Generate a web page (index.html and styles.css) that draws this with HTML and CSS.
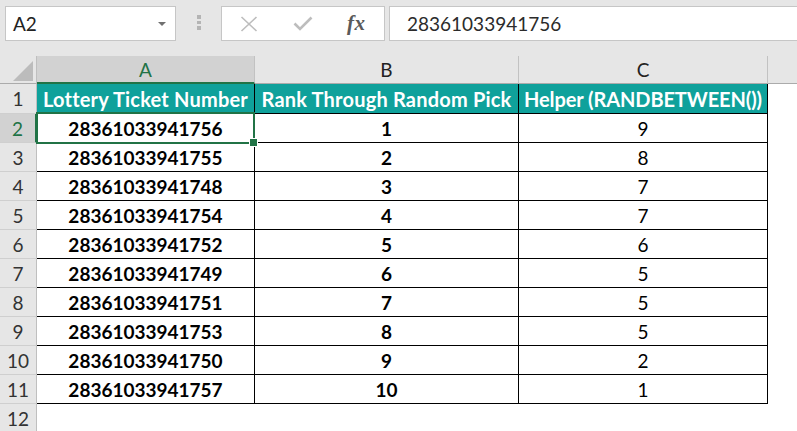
FILE: index.html
```html
<!DOCTYPE html>
<html>
<head>
<meta charset="utf-8">
<link rel="stylesheet" href="styles.css">
</head>
<body>
<div class="app">
  <div class="fbar">
    <div class="namebox"><span>A2</span><span class="arrow"></span></div>
    <div class="dots"><i></i><i></i><i></i></div>
    <div class="fnbox">
      <svg class="ic-x" width="18" height="16" viewBox="0 0 18 16"><path d="M1.5 1 L16.5 15 M16.5 1 L1.5 15" stroke="#bdbdbd" stroke-width="1.6" fill="none"/></svg>
      <svg class="ic-ok" width="20" height="15" viewBox="0 0 20 15"><path d="M1.5 7.5 L7 13 L18.5 1.5" stroke="#bdbdbd" stroke-width="2.6" fill="none"/></svg>
      <span class="fx">fx</span>
    </div>
    <div class="formula">28361033941756</div>
  </div>
  <div class="sheet">
    <div class="corner"><span class="tri"></span></div>
    <div class="ch sel">A</div>
    <div class="ch">B</div>
    <div class="ch">C</div>
    <div class="ch last"></div>

    <div class="rh">1</div>
    <div class="hd">Lottery Ticket Number</div>
    <div class="hd">Rank Through Random Pick</div>
    <div class="hd tight">Helper (RANDBETWEEN())</div>
    <div class="blank"></div>

    <div class="rh sel">2</div>
    <div class="c b active">28361033941756<span class="selbox"><span class="handle"></span></span></div>
    <div class="c b">1</div>
    <div class="c">9</div>
    <div class="blank"></div>

    <div class="rh">3</div>
    <div class="c b">28361033941755</div>
    <div class="c b">2</div>
    <div class="c">8</div>
    <div class="blank"></div>

    <div class="rh">4</div>
    <div class="c b">28361033941748</div>
    <div class="c b">3</div>
    <div class="c">7</div>
    <div class="blank"></div>

    <div class="rh">5</div>
    <div class="c b">28361033941754</div>
    <div class="c b">4</div>
    <div class="c">7</div>
    <div class="blank"></div>

    <div class="rh">6</div>
    <div class="c b">28361033941752</div>
    <div class="c b">5</div>
    <div class="c">6</div>
    <div class="blank"></div>

    <div class="rh">7</div>
    <div class="c b">28361033941749</div>
    <div class="c b">6</div>
    <div class="c">5</div>
    <div class="blank"></div>

    <div class="rh">8</div>
    <div class="c b">28361033941751</div>
    <div class="c b">7</div>
    <div class="c">5</div>
    <div class="blank"></div>

    <div class="rh">9</div>
    <div class="c b">28361033941753</div>
    <div class="c b">8</div>
    <div class="c">5</div>
    <div class="blank"></div>

    <div class="rh">10</div>
    <div class="c b">28361033941750</div>
    <div class="c b">9</div>
    <div class="c">2</div>
    <div class="blank"></div>

    <div class="rh">11</div>
    <div class="c b">28361033941757</div>
    <div class="c b">10</div>
    <div class="c">1</div>
    <div class="blank"></div>

    <div class="rh">12</div>
    <div class="blank"></div>
    <div class="blank"></div>
    <div class="blank"></div>
    <div class="blank"></div>
  </div>
</div>
</body>
</html>
```
FILE: styles.css
```css
* { box-sizing: border-box; }
html, body { margin: 0; padding: 0; }
body {
  width: 797px;
  height: 431px;
  overflow: hidden;
  background: #e6e6e6;
  font-family: Lato, "Open Sans", sans-serif;
}
.app { display: flex; flex-direction: column; }

/* formula bar */
.fbar {
  height: 56px;
  padding-top: 6px;
  display: flex;
  align-items: flex-start;
}
.namebox {
  margin-left: 5px;
  width: 171px;
  height: 35px;
  background: #fff;
  border: 1px solid #c6c6c6;
  display: flex;
  align-items: center;
  padding-left: 7px;
  font-size: 19px;
  color: #222;
}
.namebox .arrow {
  margin-left: auto;
  margin-right: 9px;
  width: 0;
  height: 0;
  border-left: 4px solid transparent;
  border-right: 4px solid transparent;
  border-top: 4px solid #707070;
}
.dots {
  width: 45px;
  display: flex;
  flex-direction: column;
  align-items: center;
  padding-top: 9px;
  gap: 2px;
}
.dots i {
  display: block;
  width: 4px;
  height: 3.5px;
  background: #b4b4b4;
}
.fnbox {
  width: 164px;
  height: 35px;
  background: #fff;
  border: 1px solid #c6c6c6;
  display: flex;
  align-items: center;
  padding-left: 18px;
}
.ic-x { display: block; }
.ic-ok { display: block; margin-left: 35px; }
.fx {
  margin-left: 34px;
  font-family: "Liberation Serif", serif;
  font-style: italic;
  font-weight: bold;
  font-size: 21px;
  color: #5a5a5a;
  letter-spacing: 0.5px;
}
.formula {
  margin-left: 4px;
  flex: 1;
  height: 35px;
  background: #fff;
  border: 1px solid #c6c6c6;
  border-right: none;
  padding-left: 17px;
  display: flex;
  align-items: center;
  font-size: 19px;
  color: #2b2b2b;
}

/* sheet */
.sheet {
  display: grid;
  grid-template-columns: 37px 218px 264px 249px 29px;
  grid-template-rows: 28px 30px repeat(10, 29px) 29px;
  background: #fff;
}
.corner {
  background: #e6e6e6;
  border-right: 1px solid #bfbfbf;
  border-bottom: 1px solid #ababab;
  position: relative;
}
.tri {
  position: absolute;
  right: 3px;
  bottom: 2px;
  width: 0;
  height: 0;
  border-left: 20px solid transparent;
  border-bottom: 20px solid #bcbcbc;
}
.ch {
  background: #e6e6e6;
  border-right: 1px solid #c2c2c2;
  border-bottom: 1px solid #ababab;
  display: flex;
  align-items: center;
  justify-content: center;
  font-size: 19px;
  color: #222;
}
.ch.last { border-right: none; }
.ch.sel {
  background: #d2d2d2;
  color: #217346;
  border-bottom: 2px solid #217346;
  padding-top: 1px;
}
.rh {
  background: #e6e6e6;
  border-right: 1px solid #bfbfbf;
  border-bottom: 1px solid #cfcfcf;
  display: flex;
  align-items: center;
  justify-content: center;
  font-size: 19px;
  color: #333;
}
.rh.sel {
  background: #d2d2d2;
  color: #217346;
  border-right: 2px solid #217346;
}
.hd {
  background: #0fa19b;
  color: #fff;
  font-weight: bold;
  font-size: 20px;
  letter-spacing: 0.2px;
  border-right: 1px solid #000;
  border-bottom: 1px solid #000;
  display: flex;
  align-items: center;
  justify-content: center;
  white-space: nowrap;
}
.hd.tight { letter-spacing: -0.1px; }
.c {
  border-right: 1px solid #000;
  border-bottom: 1px solid #000;
  display: flex;
  align-items: center;
  justify-content: center;
  font-size: 19px;
  color: #000;
}
.c.b { font-weight: bold; }
.active { position: relative; }
.selbox {
  position: absolute;
  left: -1px;
  top: -2px;
  width: 219px;
  height: 32px;
  border: 2px solid #217346;
}
.handle {
  position: absolute;
  right: -4px;
  bottom: -4px;
  width: 7px;
  height: 7px;
  background: #217346;
  outline: 1px solid #fff;
}
.blank { background: #fff; }
```
